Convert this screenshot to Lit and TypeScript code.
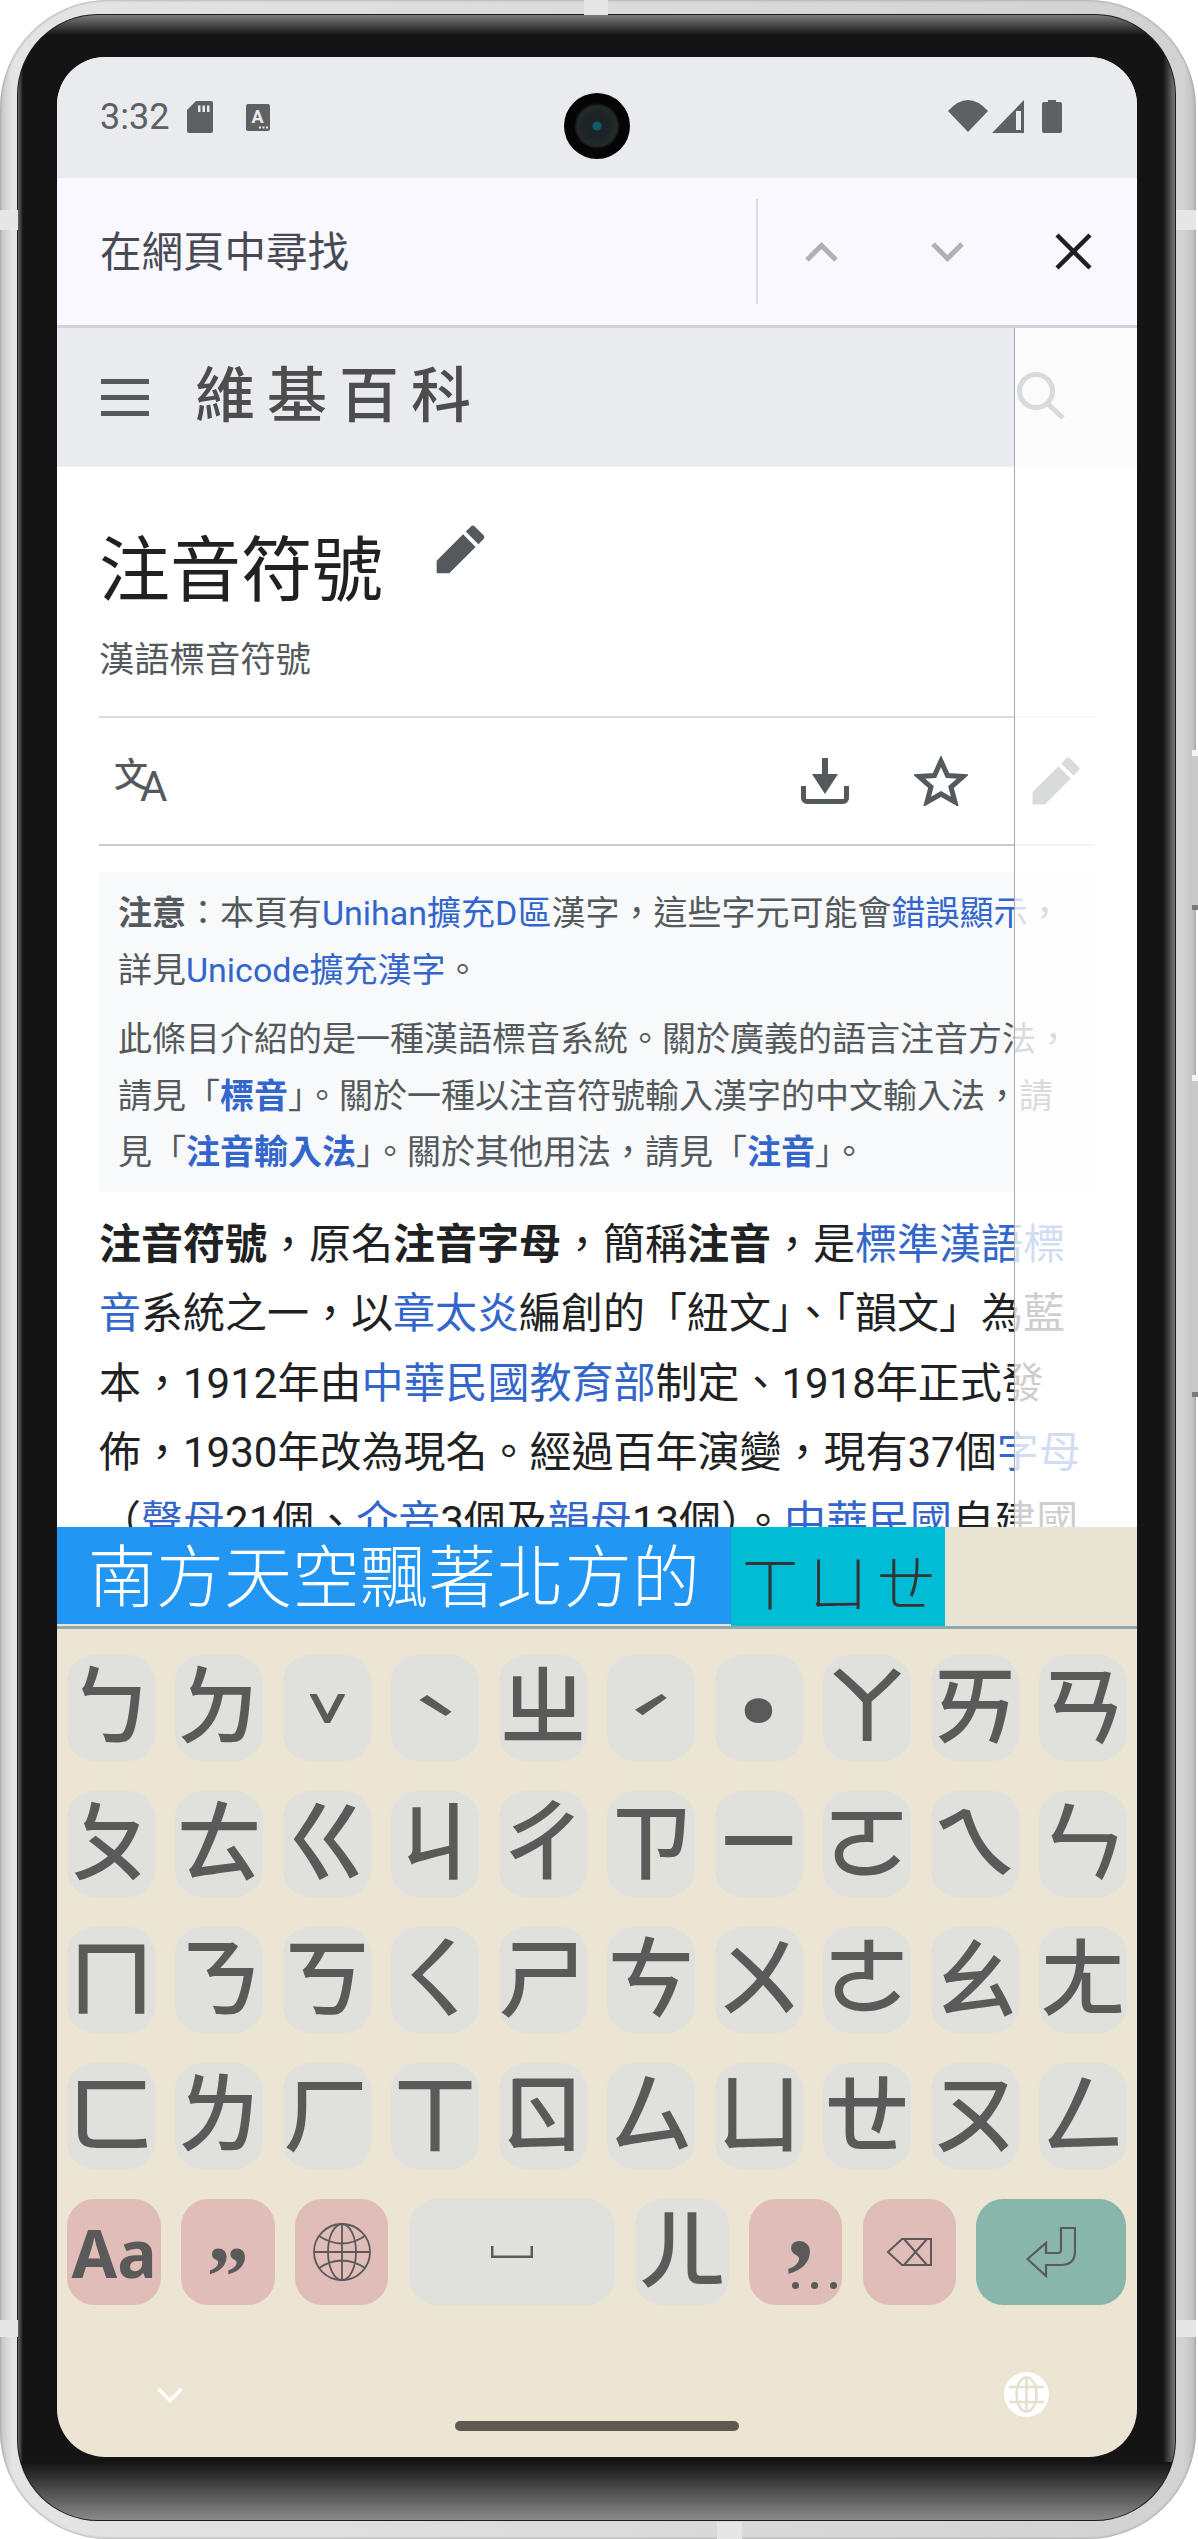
import {LitElement, html, css, svg} from 'lit';
import {customElement} from 'lit/decorators.js';

const ROWS = [
  ['ㄅ', 'ㄉ', 'ˇ', 'ˋ', 'ㄓ', 'ˊ', '˙', 'ㄚ', 'ㄞ', 'ㄢ'],
  ['ㄆ', 'ㄊ', 'ㄍ', 'ㄐ', 'ㄔ', 'ㄗ', 'ㄧ', 'ㄛ', 'ㄟ', 'ㄣ'],
  ['ㄇ', 'ㄋ', 'ㄎ', 'ㄑ', 'ㄕ', 'ㄘ', 'ㄨ', 'ㄜ', 'ㄠ', 'ㄤ'],
  ['ㄈ', 'ㄌ', 'ㄏ', 'ㄒ', 'ㄖ', 'ㄙ', 'ㄩ', 'ㄝ', 'ㄡ', 'ㄥ'],
];

const TONES: Record<string, string> = {'ˇ': 'caron', 'ˋ': 'grave', 'ˊ': 'acute', '˙': 'dot'};

const PENCIL = svg`<path d="M16.77 8l1.94-2a1 1 0 0 0 0-1.41l-3.34-3.3a1 1 0 0 0-1.41 0L12 3.23zm-5.81-3.71L1 14.25V19h4.75l9.96-9.96-4.75-4.75z"/>`;

@customElement('app-root')
export class AppRoot extends LitElement {
  static styles = css`
    :host {
      display: block;
      width: 1198px;
      height: 2539px;
      background: #fff;
      font-family: Roboto, "Noto Sans CJK TC", sans-serif;
    }

    .phone {
      position: relative;
      box-sizing: border-box;
      width: 1196px;
      height: 2539px;
      padding: 15px 21px 19px 18px;
      background: linear-gradient(90deg, #c4c4c4, #e4e4e4 1%, #d2d2d2 99%, #bcbcbc);
      border-radius: 108px;
      box-shadow: inset 0 0 3px #8c8c8c;
    }

    .tick {
      position: absolute;
      background: #e6e6e6;
    }

    .tick.top { top: 0; left: 584px; width: 24px; height: 15px; }
    .tick.bottom { bottom: 0; left: 717px; width: 25px; height: 17px; }
    .tick.l1 { left: 0; top: 210px; width: 18px; height: 20px; }
    .tick.l2 { left: 0; top: 2320px; width: 18px; height: 17px; }
    .tick.r1 { right: 0; top: 210px; width: 20px; height: 20px; }
    .tick.r2 { right: 0; top: 2320px; width: 20px; height: 17px; }

    .side-btn {
      position: absolute;
      left: 1192px;
      width: 6px;
      background: linear-gradient(#f4f4f4 0 6px, #c9c9c9 6px calc(100% - 5px), #7a7a7a calc(100% - 5px));
    }

    .side-btn.power { top: 750px; height: 160px; }
    .side-btn.volume { top: 1075px; height: 322px; }

    .bezel {
      box-sizing: border-box;
      height: 100%;
      padding: 42px 38px 63px 39px;
      background:
        linear-gradient(#7c7c7c, #141414 20px) top / 100% 30px no-repeat,
        linear-gradient(#141414, #8a8a8a) bottom / 100% 58px no-repeat,
        linear-gradient(90deg, #141414, #777) right / 12px 100% no-repeat,
        linear-gradient(90deg, #666, #141414) left / 5px 100% no-repeat,
        #141414;
      border-radius: 80px;
      box-shadow: 0 0 0 1px #1c1c1c;
    }

    .screen {
      position: relative;
      display: flex;
      flex-direction: column;
      width: 1080px;
      height: 2400px;
      overflow: hidden;
      background: #ece5d3;
      border-radius: 48px;
    }

    /* status bar */
    .status {
      display: flex;
      align-items: flex-start;
      flex: none;
      height: 121px;
      padding-left: 43px;
      box-sizing: border-box;
      background: #eaebef;
      fill: #5f6063;
    }

    .time {
      margin-top: 40px;
      margin-right: 18px;
      font-size: 36px;
      line-height: 40px;
      color: #5f6063;
    }

    .sd { margin-top: 44px; margin-right: 33px; }
    .a-icon { margin-top: 47px; }
    .wifi { margin-top: 43px; margin-left: 678px; }
    .signal { margin-top: 43px; margin-left: 4px; }
    .battery { margin-top: 43px; margin-left: 18px; }

    .camera {
      position: absolute;
      top: 36px;
      left: 507px;
      width: 66px;
      height: 66px;
      background: radial-gradient(circle, #0f5a6a 0 4px, #1c2426 5px 12px, #262929 20px, #050505 23px);
      border-radius: 50%;
    }

    /* find in page */
    .find {
      display: flex;
      align-items: center;
      flex: none;
      height: 147px;
      background: #f8f8fe;
      border-bottom: 3px solid #d1d2d8;
    }

    .find-text {
      width: 656px;
      padding-left: 43px;
      margin-top: -6px;
      font-size: 41.5px;
      color: #474a53;
    }

    .find-sep {
      width: 2px;
      height: 105px;
      background: #dcdce3;
    }

    .find-up { margin-left: 47px; }
    .find-down { margin-left: 93px; }
    .find-close { margin-left: 91px; }

    /* page */
    .web {
      position: relative;
      flex: none;
      height: 1199px;
      overflow: hidden;
      background: #fff;
    }

    .web-head {
      display: flex;
      align-items: center;
      height: 138px;
      padding-left: 44px;
      background: #eaebef;
      box-shadow: 0 1px 0 #eeeff2;
    }

    .burger {
      display: flex;
      flex-direction: column;
      gap: 11px;
      width: 48px;
    }

    .burger i {
      height: 5px;
      background: #54595d;
    }

    .logo {
      margin-left: 46px;
      font-size: 60px;
      font-weight: 500;
      line-height: 70px;
      letter-spacing: 12px;
      color: #4d4d4d;
    }

    .web-search {
      position: absolute;
      top: 44px;
      left: 960px;
    }

    .article {
      padding: 0 42px;
    }

    .title-row {
      display: flex;
      align-items: flex-start;
      margin-top: 60px;
    }

    .title {
      font-size: 71px;
      line-height: 90px;
      color: #202122;
    }

    .title-edit {
      margin-top: -3px;
      margin-left: 51px;
      fill: #54595d;
    }

    .subtitle {
      margin-top: 19px;
      font-size: 35.3px;
      line-height: 50px;
      color: #54595d;
    }

    .tools {
      display: flex;
      align-items: center;
      height: 126px;
      margin-top: 31px;
      border-top: 2px solid #dadde1;
      border-bottom: 2px solid #c8ccd1;
      fill: #54595d;
      stroke: #54595d;
    }

    .lang {
      display: flex;
      align-items: flex-end;
      margin-left: 15px;
      color: #54595d;
    }

    .lang b {
      margin-bottom: 12px;
      font-size: 34px;
      font-weight: 500;
      line-height: 34px;
    }

    .lang span {
      margin-left: -8px;
      font-size: 42px;
      line-height: 34px;
    }

    .tool-dl { margin-left: 634px; }
    .tool-star { margin-left: 65px; }
    .tool-edit { margin-left: 62px; stroke: none; }

    .notice {
      box-sizing: border-box;
      height: 320px;
      margin-top: 26px;
      padding: 13px 19px 0;
      font-size: 34px;
      line-height: 56.5px;
      color: #54595d;
      background: #f8f9fa;
    }

    .notice p {
      margin: 0 0 13px;
      white-space: nowrap;
    }

    a {
      color: #36c;
      text-decoration: none;
    }

    .body-text {
      margin-top: 18px;
      font-size: 42px;
      line-height: 69.3px;
      color: #202122;
      white-space: nowrap;
    }

    .fade {
      position: absolute;
      top: 0;
      bottom: 0;
      left: 957px;
      right: 0;
      background: rgba(255, 255, 255, .78);
      border-left: 1px solid #aaa;
    }

    /* composing strip */
    .compose {
      display: flex;
      flex: none;
      height: 102px;
      background: #e9e3d3;
    }

    .candidate {
      box-sizing: border-box;
      width: 674px;
      height: 97px;
      padding-left: 31px;
      font-size: 68px;
      font-weight: 300;
      line-height: 104px;
      color: #fff;
      white-space: nowrap;
      overflow: hidden;
      background: #2196f3;
    }

    .reading {
      box-sizing: border-box;
      width: 214px;
      height: 99px;
      padding-left: 5px;
      font-size: 60px;
      font-weight: 300;
      line-height: 118px;
      color: #333;
      white-space: nowrap;
      background: #00bcd4;
    }

    .reading span {
      display: inline-block;
      width: 68px;
      text-align: center;
    }

    .compose-line {
      flex: none;
      height: 3px;
      margin-top: -3px;
      background: #8fa9ae;
    }

    /* keyboard */
    .keyboard {
      display: flex;
      flex-direction: column;
      flex: 1;
      gap: 30px;
      padding: 26px 10.4px 0;
      color: #5a5a5a;
    }

    .row {
      display: flex;
      gap: 20.4px;
      height: 106px;
    }

    .key {
      position: relative;
      display: flex;
      align-items: center;
      justify-content: center;
      flex: 1 1 0;
      min-width: 0;
      font-size: 88px;
      font-weight: 500;
      line-height: 1;
      background: #e0e1dc;
      border-radius: 27px;
    }

    .key.mod {
      flex: none;
      width: 93.4px;
      background: #e0bdb9;
    }

    .key.plain {
      flex: none;
      width: 93.4px;
    }

    .key.space {
      flex: none;
      width: 206px;
    }

    .key.enter {
      flex: none;
      width: 150px;
      background: #88b6aa;
    }

    .caron {
      font-size: 128px;
      font-weight: 300;
      transform: translateY(72px) scaleY(1.7);
    }

    .grave, .acute {
      font-size: 78px;
      font-weight: 700;
      transform: translateY(14px) scaleY(.68);
    }

    .dot {
      font-size: 190px;
      font-weight: 700;
      transform: translateY(65px);
    }

    .aa {
      font-family: "Noto Sans", sans-serif;
      font-size: 66px;
      font-weight: 700;
    }

    .quote {
      font-family: "Liberation Serif", serif;
      font-size: 84px;
      font-weight: 700;
      transform: translateY(25px);
    }

    .comma {
      font-family: "Liberation Serif", serif;
      font-size: 108px;
      font-weight: 700;
      transform: translate(5px, -31px);
    }

    .dots {
      position: absolute;
      left: 43px;
      bottom: 16px;
      display: flex;
      gap: 12px;
    }

    .dots i {
      width: 7px;
      height: 7px;
      background: #5a5a5a;
      border-radius: 50%;
    }

    .nav {
      display: flex;
      align-items: flex-start;
      height: 152px;
      margin: -30px -10.4px 0;
      padding-left: 100px;
    }

    .nav-down { margin-top: 82px; }

    .pill {
      width: 284px;
      height: 10px;
      margin-top: 116px;
      margin-left: 272px;
      background: #5e5a52;
      border-radius: 5px;
    }

    .nav-globe { margin-top: 67px; margin-left: 265px; }
  `;

  renderGlobe(size: number) {
    return html`<svg width=${size} height=${size} viewBox="0 0 58 58" fill="none" stroke="#5a5a5a" stroke-width="1.8">
      <circle cx="29" cy="29" r="28"/>
      <ellipse cx="29" cy="29" rx="14" ry="28"/>
      <path d="M29 1V57M1 29H57M6 13Q29 28 52 13M6 45Q29 30 52 45"/>
    </svg>`;
  }

  renderKey(label: string) {
    const tone = TONES[label];
    return html`<div class="key">${tone ? html`<span class=${tone}>${label}</span>` : label}</div>`;
  }

  render() {
    return html`
      <div class="phone" lang="zh-TW">
        <i class="tick top"></i><i class="tick bottom"></i>
        <i class="tick l1"></i><i class="tick l2"></i>
        <i class="tick r1"></i><i class="tick r2"></i>
        <i class="side-btn power"></i><i class="side-btn volume"></i>
        <div class="bezel">
          <div class="screen">
            <div class="status">
              <span class="time">3:32</span>
              <svg class="sd" width="26" height="32" viewBox="0 0 26 32">
                <path d="M9 0H24a2 2 0 0 1 2 2V30a2 2 0 0 1-2 2H2a2 2 0 0 1-2-2V9Z"/>
                <path d="M11 4.500h2.500V11H11ZM15.500 4.500H18V11H15.500ZM20 4.500h2.500V11H20Z" fill="#eaebef"/>
              </svg>
              <svg class="a-icon" width="24" height="27" viewBox="0 0 24 27">
                <rect width="24" height="27" rx="2"/>
                <text x="11.500" y="19" font-family="Roboto" font-weight="700" font-size="18" text-anchor="middle" fill="#eaebef">A</text>
                <path d="M13 22.500h2v2h-2ZM16.500 22.500h2v2h-2ZM20 22.500h2v2h-2Z" fill="#eaebef"/>
              </svg>
              <svg class="wifi" width="40" height="32" viewBox="0 0 40 32"><path d="M20 32L0 11Q20-11 40 11Z"/></svg>
              <svg class="signal" width="32" height="33" viewBox="0 0 32 33">
                <path d="M32 0V33H0Z"/>
                <path d="M24 11H29V30H24Z" fill="#eaebef"/>
              </svg>
              <svg class="battery" width="20" height="33" viewBox="0 0 20 33">
                <path d="M6 0H14V2H18a2 2 0 0 1 2 2V31a2 2 0 0 1-2 2H2a2 2 0 0 1-2-2V4a2 2 0 0 1 2-2H6Z"/>
              </svg>
            </div>
            <div class="camera"></div>
            <div class="find">
              <div class="find-text">在網頁中尋找</div>
              <div class="find-sep"></div>
              <svg class="find-up" width="33" height="20" viewBox="0 0 33 20" fill="none" stroke="#b0b0b5" stroke-width="5"><path d="M2 18L16.500 3.500L31 18"/></svg>
              <svg class="find-down" width="33" height="20" viewBox="0 0 33 20" fill="none" stroke="#b0b0b5" stroke-width="5"><path d="M2 2L16.500 16.500L31 2"/></svg>
              <svg class="find-close" width="37" height="37" viewBox="0 0 37 37" fill="none" stroke="#1f1f23" stroke-width="4.500"><path d="M2 2L35 35M35 2L2 35"/></svg>
            </div>
            <div class="web">
              <div class="web-head">
                <div class="burger"><i></i><i></i><i></i></div>
                <div class="logo">維基百科</div>
              </div>
              <svg class="web-search" width="48" height="47" viewBox="0 0 48 47" fill="none" stroke="#54595d" stroke-width="5">
                <circle cx="19" cy="19" r="16.500"/><path d="M30 31L46 46"/>
              </svg>
              <div class="article">
                <div class="title-row">
                  <div class="title">注音符號</div>
                  <svg class="title-edit" width="53" height="53" viewBox="0 0 20 20">${PENCIL}</svg>
                </div>
                <div class="subtitle">漢語標音符號</div>
                <div class="tools">
                  <div class="lang"><b>文</b><span>A</span></div>
                  <svg class="tool-dl" width="48" height="46" viewBox="0 0 48 46" stroke="none">
                    <path d="M21 0H27V16H37L24 36L11 16H21Z"/>
                    <path d="M2.500 28V40a3.500 3.500 0 0 0 3.500 3.500H42a3.500 3.500 0 0 0 3.500-3.500V28" fill="none" stroke="#54595d" stroke-width="5"/>
                  </svg>
                  <svg class="tool-star" width="54" height="50" viewBox="0 0 54 50" fill="none" stroke-width="5">
                    <path d="M27 5L33.500 19.500L49 20.500L37 31L41 46L27 38L13 46L17 31L5 20.500L20.500 19.500Z"/>
                  </svg>
                  <svg class="tool-edit" width="52" height="52" viewBox="0 0 20 20">${PENCIL}</svg>
                </div>
                <div class="notice">
                  <p><b>注意</b>&#xFF1A;本頁有<a>Unihan擴充D區</a>漢字&#xFF0C;這些字元可能會<a>錯誤顯示</a>&#xFF0C;<br>詳見<a>Unicode擴充漢字</a>。</p>
                  <p>此條目介紹的是一種漢語標音系統。關於廣義的語言注音方法&#xFF0C;<br>請見「<a><b>標音</b></a>」。關於一種以注音符號輸入漢字的中文輸入法&#xFF0C;請<br>見「<a><b>注音輸入法</b></a>」。關於其他用法&#xFF0C;請見「<a><b>注音</b></a>」。</p>
                </div>
                <div class="body-text">
                  <b>注音符號</b>&#xFF0C;原名<b>注音字母</b>&#xFF0C;簡稱<b>注音</b>&#xFF0C;是<a>標準漢語標</a><br>
                  <a>音</a>系統之一&#xFF0C;以<a>章太炎</a>編創的「紐文」、「韻文」為藍<br>
                  本&#xFF0C;1912年由<a>中華民國教育部</a>制定、1918年正式發<br>
                  佈&#xFF0C;1930年改為現名。經過百年演變&#xFF0C;現有37個<a>字母</a><br>
                  &#xFF08;<a>聲母</a>21個、<a>介音</a>3個及<a>韻母</a>13個&#xFF09;。<a>中華民國</a>自建國
                </div>
              </div>
              <div class="fade"></div>
            </div>
            <div class="compose">
              <div class="candidate">南方天空飄著北方的</div>
              <div class="reading"><span>ㄒ</span><span>ㄩ</span><span>ㄝ</span></div>
            </div>
            <div class="compose-line"></div>
            <div class="keyboard">
              ${ROWS.map((row) => html`<div class="row">${row.map((k) => this.renderKey(k))}</div>`)}
              <div class="row">
                <div class="key mod"><span class="aa">Aa</span></div>
                <div class="key mod"><span class="quote">”</span></div>
                <div class="key mod">${this.renderGlobe(58)}</div>
                <div class="key space">
                  <svg width="42" height="12" viewBox="0 0 42 12" fill="none" stroke="#5a5a5a" stroke-width="2.500"><path d="M1.200 0V10.800H40.800V0"/></svg>
                </div>
                <div class="key plain">ㄦ</div>
                <div class="key mod">
                  <span class="comma">,</span>
                  <div class="dots"><i></i><i></i><i></i></div>
                </div>
                <div class="key mod">
                  <svg width="46" height="28" viewBox="0 0 46 28" fill="none" stroke="#5a5a5a" stroke-width="2"><path d="M45 1H16L2 14L16 27H45ZM18 1L41 27M41 1L18 27"/></svg>
                </div>
                <div class="key enter">
                  <svg width="50" height="52" viewBox="0 0 50 52" fill="none" stroke="#5a5a5a" stroke-width="2.200"><path d="M1.500 33L20 17V27H32Q35 27 35 23V2H49V25Q49 39 35 39H20V50Z"/></svg>
                </div>
              </div>
              <div class="nav">
                <svg class="nav-down" width="26" height="16" viewBox="0 0 26 16" fill="none" stroke="#fff" stroke-width="3.500"><path d="M1.500 2L13 13.500L24.500 2"/></svg>
                <div class="pill"></div>
                <svg class="nav-globe" width="45" height="45" viewBox="0 0 45 45" fill="#fff" stroke="#e5dfce" stroke-width="2.500">
                  <circle cx="22.500" cy="22.500" r="22.500" stroke="none"/>
                  <ellipse cx="22.500" cy="22.500" rx="10" ry="17"/>
                  <path d="M22.500 5V40M5 15H40M5 30H40" fill="none"/>
                </svg>
              </div>
            </div>
          </div>
        </div>
      </div>
    `;
  }
}
